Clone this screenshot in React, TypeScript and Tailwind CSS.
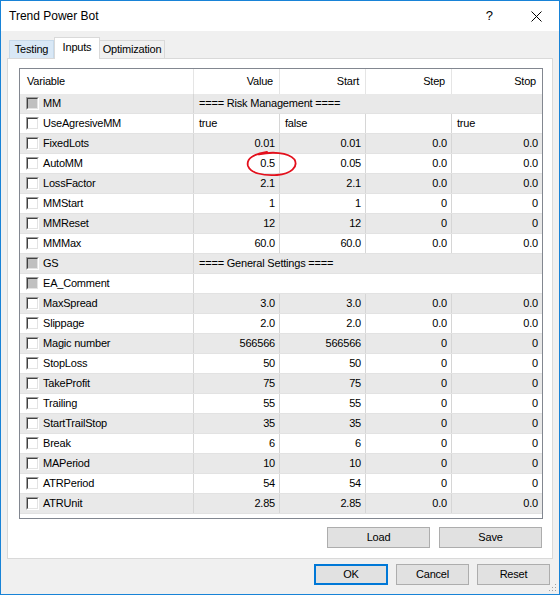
import React from 'react'

type Row = {
  name: string
  vals?: string[]
  group?: string
  disabled?: boolean
  left?: boolean
}

const ROWS: Row[] = [
  { name: 'MM', group: '==== Risk Management ====', disabled: true },
  { name: 'UseAgresiveMM', vals: ['true', 'false', '', 'true'], left: true },
  { name: 'FixedLots', vals: ['0.01', '0.01', '0.0', '0.0'] },
  { name: 'AutoMM', vals: ['0.5', '0.05', '0.0', '0.0'] },
  { name: 'LossFactor', vals: ['2.1', '2.1', '0.0', '0.0'] },
  { name: 'MMStart', vals: ['1', '1', '0', '0'] },
  { name: 'MMReset', vals: ['12', '12', '0', '0'] },
  { name: 'MMMax', vals: ['60.0', '60.0', '0.0', '0.0'] },
  { name: 'GS', group: '==== General Settings ====', disabled: true },
  { name: 'EA_Comment', group: '', disabled: true },
  { name: 'MaxSpread', vals: ['3.0', '3.0', '0.0', '0.0'] },
  { name: 'Slippage', vals: ['2.0', '2.0', '0.0', '0.0'] },
  { name: 'Magic number', vals: ['566566', '566566', '0', '0'] },
  { name: 'StopLoss', vals: ['50', '50', '0', '0'] },
  { name: 'TakeProfit', vals: ['75', '75', '0', '0'] },
  { name: 'Trailing', vals: ['55', '55', '0', '0'] },
  { name: 'StartTrailStop', vals: ['35', '35', '0', '0'] },
  { name: 'Break', vals: ['6', '6', '0', '0'] },
  { name: 'MAPeriod', vals: ['10', '10', '0', '0'] },
  { name: 'ATRPeriod', vals: ['54', '54', '0', '0'] },
  { name: 'ATRUnit', vals: ['2.85', '2.85', '0.0', '0.0'] },
]

function Check({ disabled }: { disabled?: boolean }) {
  return (
    <span className="w-[13px] h-[13px] shrink-0 border-t border-l border-t-[#a0a0a0] border-l-[#a0a0a0] border-r border-b border-r-white border-b-white flex">
      <span
        className={`flex-1 border-t border-l border-t-[#404040] border-l-[#404040] border-r border-b border-r-[#e3e3e3] border-b-[#e3e3e3] ${
          disabled ? 'bg-[#c0c0c0]' : 'bg-white'
        }`}
      />
    </span>
  )
}

function Btn({ label, w, primary }: { label: string; w: string; primary?: boolean }) {
  return (
    <button
      className={`${w} h-[21px] bg-[#e1e1e1] flex items-center justify-center text-[11px] text-black ${
        primary ? 'border-2 border-[#0078d7]' : 'border border-[#adadad]'
      }`}
    >
      {label}
    </button>
  )
}

export default function App() {
  return (
    <div className="relative w-[560px] h-[595px] border border-[#1883d7] bg-[#f0f0f0] flex flex-col font-['Liberation_Sans',Arial,sans-serif] text-black tracking-[-0.2px] overflow-hidden">
      {/* title bar */}
      <div className="h-[30px] shrink-0 bg-white flex items-center pl-[8px]">
        <span className="text-[12px] tracking-normal">Trend Power Bot</span>
        <span className="ml-auto text-[13px] tracking-normal mr-[38px]">?</span>
        <svg width="11" height="11" viewBox="0 0 11 11" className="mr-[17px]">
          <path d="M0.5 0.5 L10.5 10.5 M10.5 0.5 L0.5 10.5" stroke="#000" strokeWidth="1" />
        </svg>
      </div>

      {/* tabs */}
      <div className="mt-[6px] h-[21px] shrink-0 flex items-end pl-[8px] text-[11px] relative z-10">
        <div className="w-[45px] h-[18px] bg-[#d9e8f6] border border-b-0 border-[#c6d9ea] flex items-center justify-center">
          Testing
        </div>
        <div className="w-[46px] h-[22px] bg-white border border-b-0 border-[#d9d9d9] flex items-center justify-center -mb-[1px] pb-[2px]">
          Inputs
        </div>
        <div className="w-[65px] h-[18px] bg-[#f0f0f0] border border-b-0 border-l-0 border-[#d9d9d9] flex items-center justify-center">
          Optimization
        </div>
      </div>

      {/* panel */}
      <div className="ml-[6px] w-[546px] h-[501px] shrink-0 bg-white border border-[#d9d9d9] flex flex-col pl-[11px] pr-[9px] pt-[9px]">
        <div className="relative w-[524px] h-[451px] border border-[#828790] flex flex-col text-[11px]">
          {/* header */}
          <div className="h-[25px] grid grid-cols-[174px_86px_86px_86px_1fr] leading-[25px]">
            <div className="pl-[7px] border-r border-[#e5e5e5]">Variable</div>
            <div className="text-right pr-[6px] border-r border-[#e5e5e5]">Value</div>
            <div className="text-right pr-[6px] border-r border-[#e5e5e5]">Start</div>
            <div className="text-right pr-[6px] border-r border-[#e5e5e5]">Step</div>
            <div className="text-right pr-[6px]">Stop</div>
          </div>

          {ROWS.map((r, i) => (
            <div
              key={r.name}
              className={`h-[20px] grid grid-cols-[174px_86px_86px_86px_1fr] leading-[19px] border-b border-[#e2e2e2] ${
                i % 2 === 0 ? 'bg-[#e9e9e9]' : 'bg-white'
              }`}
            >
              <div className="flex items-center pl-[6px] gap-[4px] border-r border-[#d6d6d6]">
                <Check disabled={r.disabled} />
                <span className="whitespace-nowrap">{r.name}</span>
              </div>
              {r.group !== undefined ? (
                <div className="col-span-4 pl-[5px] whitespace-nowrap">{r.group}</div>
              ) : (
                r.vals!.map((v, j) => (
                  <div
                    key={j}
                    className={`${r.left ? 'text-left pl-[5px]' : 'text-right pr-[4px]'} ${
                      j < 3 ? 'border-r border-[#d6d6d6]' : ''
                    }`}
                  >
                    {v}
                  </div>
                ))
              )}
            </div>
          ))}

          {/* red annotation around AutoMM value */}
          <svg
            className="absolute left-0 top-0 pointer-events-none"
            width="524"
            height="451"
            viewBox="19 68 524 451"
          >
            <path
              d="M258 153.5 C270 150.5 287 151 293.5 158.5 C297.5 166 290 173 276 174 C262 175 249.5 172 247 165 C245 158 252 153 266 151"
              fill="none"
              stroke="#e3101c"
              strokeWidth="1.8"
              strokeLinecap="round"
            />
          </svg>
        </div>

        <div className="mt-[8px] flex justify-end gap-[9px] pr-[1px]">
          <Btn label="Load" w="w-[103px]" />
          <Btn label="Save" w="w-[103px]" />
        </div>
      </div>

      {/* bottom buttons */}
      <div className="mt-[5px] flex justify-end gap-[8px] pr-[9px]">
        <Btn label="OK" w="w-[74px]" primary />
        <Btn label="Cancel" w="w-[73px]" />
        <Btn label="Reset" w="w-[73px]" />
      </div>

      {/* size grip */}
      <svg className="absolute right-[2px] bottom-[2px]" width="9" height="9" viewBox="0 0 9 9">
        <rect x="7" y="1" width="1" height="1" fill="#a0a0a0" />
        <rect x="4" y="4" width="1" height="1" fill="#a0a0a0" />
        <rect x="7" y="4" width="1" height="1" fill="#a0a0a0" />
        <rect x="1" y="7" width="1" height="1" fill="#a0a0a0" />
        <rect x="4" y="7" width="1" height="1" fill="#a0a0a0" />
        <rect x="7" y="7" width="1" height="1" fill="#a0a0a0" />
      </svg>
    </div>
  )
}
